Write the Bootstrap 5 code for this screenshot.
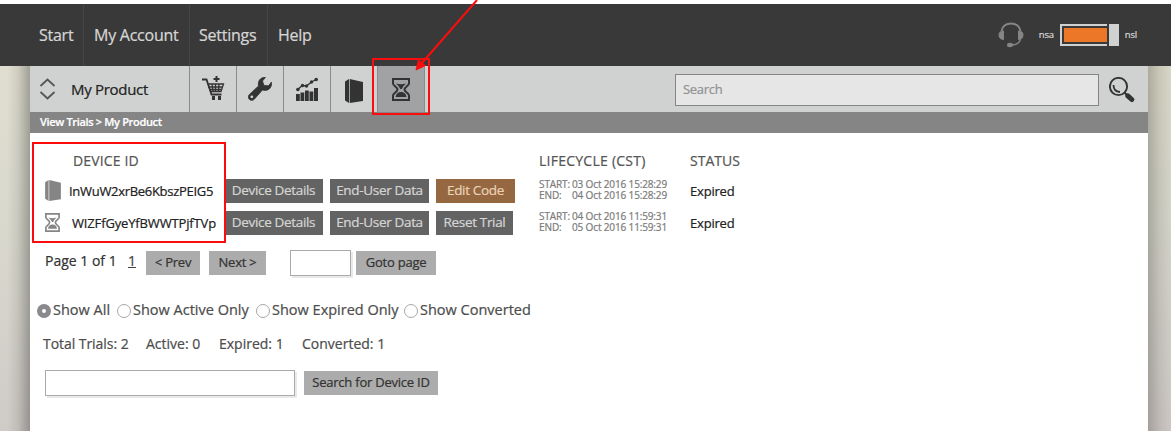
<!DOCTYPE html>
<html lang="en">
<head>
    <meta charset="UTF-8">
    <meta name="viewport" content="width=device-width, initial-scale=1.0">
    <title>View Trials</title>
    <link href="https://cdn.jsdelivr.net/npm/bootstrap@5.3.0/dist/css/bootstrap.min.css" rel="stylesheet">
    <style>
        body { font-family: "Open Sans", "Noto Sans", sans-serif; font-size: 14px; line-height: 20px; color: #4d4d4d; background: #fff; height: 431px; overflow: hidden; white-space: nowrap; -webkit-text-stroke: .22px; }
        .page { height: 431px; padding-top: 4px; }
        .topbar { height: 62px; background: #393939; padding-left: 30px; padding-right: 34px; color: #d6d6d6; }
        .topbar a { color: #d6d6d6; text-decoration: none; font-size: 16px; height: 62px; line-height: 62px; border-right: 1px solid #454545; letter-spacing: -.25px; }
        .topbar a:last-child { border: 0; }
        .m-start { width: 54px; padding-left: 9px; }
        .m-account { width: 106px; padding-left: 10px; }
        .m-settings { width: 78px; padding-left: 9px; }
        .m-help { width: 60px; padding-left: 10px; }
        .headset { margin-right: 15px; }
        .toggle-text { font-size: 9.5px; letter-spacing: -.2px; }
        .toggle-box { width: 47px; height: 22px; border: 2px solid #d0d2d1; border-right: 0; padding: 2px 0 2px 2px; margin-left: 6px; }
        .toggle-fill { height: 14px; background: #ec7728; }
        .toggle-knob { width: 10px; height: 22px; background: #d0d2d1; margin: 0 6px 0 2px; }
        .stage { height: 365px; }
        .edge { width: 30px; background: linear-gradient(90deg, rgba(0,0,0,0) 25%, rgba(0,0,0,.08) 60%, rgba(0,0,0,.28)), linear-gradient(#e0ded0, #d9d8cd 45%, #cfcbc7); }
        .edge-right { width: 23px; background: linear-gradient(270deg, rgba(0,0,0,0), rgba(0,0,0,.07) 50%, rgba(0,0,0,.2)), linear-gradient(#d8d7c6, #d3d2c7 45%, #ccc7c4); }
        .sheet { width: 1118px; background: #fff; }
        .toolbar { height: 46px; background: #d0d2d1; }
        .product { width: 159px; padding-left: 9px; font-size: 15px; color: #222; letter-spacing: -.3px; }
        .product svg { margin-right: 15px; }
        .tool { width: 47px; height: 46px; border-left: 1px solid #8b8b8b; }
        .tool.active { width: 48px; background: #a1a2a4; border-right: 1px solid #8b8b8b; }
        .find { width: 424px; height: 32px; border: 1px solid #858585; background: #e6e6e6; padding-left: 7px; line-height: 29px; font-size: 13px; letter-spacing: -.3px; color: #929292; margin: 2px 10px 0 0; }
        .find-icon { margin: 2px 13px 0 0; }
        .crumbs { height: 21px; line-height: 20px; background: #858585; color: #fff; font-size: 11px; font-weight: 600; padding-left: 10px; letter-spacing: -.33px; }
        .head-line { height: 20px; margin-top: 18px; font-size: 14px; color: #555; padding-left: 1px; }
        .h-id { width: 466px; letter-spacing: .15px; }
        .h-life { width: 151px; letter-spacing: .25px; }
        .dev-list { margin-top: 4px; }
        .dev-line { height: 32px; color: #222; }
        .dev-icon { width: 42px; padding-left: 15px; }
        .dev-icon svg { margin-top: -2px; }
        .dev-id { width: 152px; font-size: 13px; line-height: 18px; padding-bottom: 1px; }
        .id-a { margin-left: -3px; width: 155px; letter-spacing: -.3px; }
        .id-b { letter-spacing: -.15px; }
        .dev-acts { width: 315px; }
        .dev-life { width: 151px; font-size: 10px; line-height: 11px; color: #7b7b7b; letter-spacing: -.14px; padding-bottom: 2px; }
        .life-key { width: 33px; letter-spacing: -.1px; }
        .dev-state { font-size: 13px; letter-spacing: -.2px; }
        .flat { height: 24px; line-height: 23px; font-size: 13.5px; letter-spacing: -.33px; text-align: center; background: #636363; color: #d5d5d5; margin-right: 7px; }
        .w99 { width: 99px; }
        .w79 { width: 79px; }
        .w77 { width: 77px; }
        .brown { background: #956842; color: #ead2b5; }
        .grey { background: #acacac; color: #333; margin-right: 0; font-size: 13px; letter-spacing: -.22px; }
        .field { height: 26px; border: 1px solid #aaa; background: #fff; box-shadow: 2px 2px 0 #e9e9e9; }
        .pager { height: 26px; margin-top: 11px; padding-left: 15px; }
        .page-count { width: 83px; color: #333; margin-top: -5px; }
        .page-one { width: 18px; margin-top: -5px; color: #444; text-decoration: underline; }
        .prev { width: 54px; margin-right: 9px; }
        .next { width: 57px; margin-right: 24px; }
        .goto-field { width: 61px; margin-right: 5px; }
        .goto { width: 80px; }
        .filters { margin-top: 24px; padding-left: 7px; height: 20px; }
        .filters span { font-size: 14.5px; }
        .dot { width: 14px; height: 14px; border: 1px solid #a8a8a8; border-radius: 50%; background: #fff; margin: 2px 2px 0 0; }
        .dot.on { border: 5px solid #8a8a8e; }
        .f1 { width: 64px; }
        .f2 { width: 123px; }
        .f3 { width: 132px; }
        .totals { margin-top: 14px; padding-left: 13px; height: 20px; }
        .t1 { width: 103px; letter-spacing: -.05px; }
        .t2 { width: 73px; }
        .t3 { width: 83px; }
        .lookup { margin-top: 16px; padding-left: 15px; }
        .lookup-field { width: 250px; margin-right: 9px; }
        .lookup-go { width: 134px; }
        .note-box { position: absolute; border: 2px solid #fb0d0d; }
        .note-ids { left: 32px; top: 142px; width: 194px; height: 101px; }
        .note-tool { left: 372px; top: 58px; width: 58px; height: 57px; }
        .note-arrow { position: absolute; left: 410px; top: 0; }
    </style>
</head>
<body>
    <svg class="d-none">
        <symbol id="glass" viewBox="0 0 18 23">
            <path d="M1 1h16v4.500c0 2-4.500 3.500-4.500 6s4.500 4 4.500 6V22H1v-4.500c0-2 4.500-3.500 4.500-6S1 7.500 1 5.500z" fill="none" stroke="currentColor" stroke-width="2"/>
            <path d="M4 5.500q5 1.600 10 0-3.500 3-4.300 5.500H8.300Q7.500 8.500 4 5.500zM3.500 19q1-5 5.500-5t5.500 5z" fill="currentColor"/>
        </symbol>
        <symbol id="book" viewBox="0 0 18 24">
            <path d="M0 2.500 4 0v24l-4-2.500zM4.700 0 18 3v19L4.700 24z" fill="currentColor"/>
        </symbol>
    </svg>

    <div class="page">
        <div class="topbar d-flex align-items-center justify-content-between">
            <nav class="d-flex">
                <a href="#" class="m-start">Start</a>
                <a href="#" class="m-account">My Account</a>
                <a href="#" class="m-settings">Settings</a>
                <a href="#" class="m-help">Help</a>
            </nav>
            <div class="d-flex align-items-center">
                <svg class="headset" width="26" height="26" viewBox="0 0 26 26" fill="none" stroke="#858585">
                    <path d="M3.500 9C4 4.500 8 1.500 13 1.500S22 4.500 22.500 9" stroke-width="2"/>
                    <path d="M5.500 9v8.500Q1 17 1 13t4.500-4zM20.500 9v8.500Q25 17 25 13t-4.500-4z" fill="#858585" stroke-width="1"/>
                    <path d="M22.500 16c0 4-2 6.500-9 7" stroke-width="1.500"/>
                    <ellipse cx="12" cy="23" rx="3" ry="2.200" fill="#858585" stroke="none"/>
                </svg>
                <span class="toggle-text">nsa</span>
                <div class="toggle-box"><div class="toggle-fill"></div></div>
                <div class="toggle-knob"></div>
                <span class="toggle-text">nsl</span>
            </div>
        </div>

        <div class="stage d-flex">
            <div class="edge"></div>
            <div class="sheet">
                <div class="toolbar d-flex align-items-center">
                    <div class="product d-flex align-items-center">
                        <svg width="17" height="22" viewBox="0 0 17 22" fill="none" stroke="#555" stroke-width="1.800"><path d="M1.500 8 8.500 1.500l7 6.500M1.500 14l7 6.500 7-6.500"/></svg>
                        <span>My Product</span>
                    </div>
                    <div class="tool d-flex align-items-center justify-content-center">
                        <svg width="24" height="26" viewBox="0 0 24 26" fill="none" stroke="#333">
                            <path d="M1 3.500h4.500l5 15h10" stroke-width="1.800"/>
                            <path d="M6.500 8h16L20 15.500H9M7 11h14.500M8 13.500h13M11 8l1 7.500M14.500 8v7.500M18 8l-.5 7.500" stroke-width="1.300"/>
                            <path d="M15.500 0v6M12.500 3h6" stroke-width="2"/>
                            <path d="M11 20h3v4h-3zM17 20h3v4h-3z" fill="#333" stroke="none"/>
                        </svg>
                    </div>
                    <div class="tool d-flex align-items-center justify-content-center">
                        <svg width="24" height="24" viewBox="0 0 24 24">
                            <path d="M17.500.3 14.500 4l1.500 4.500 4.500.3 3-3.800c.6 4.500-1.700 7.800-5.500 8.300-1.500.2-2.600 0-3.500-.4L6.500 22c-2 2.300-5 1.400-5.900-.8-.5-1.500-.2-2.900.8-3.700L10.500 9C9.500 4 12.500 0 17.500.3z" fill="#333" stroke="#333" stroke-width=".8"/>
                            <circle cx="3.800" cy="19.800" r="1.400" fill="#d0d2d1"/>
                        </svg>
                    </div>
                    <div class="tool d-flex align-items-center justify-content-center">
                        <svg width="22" height="24" viewBox="0 0 22 24" fill="#333">
                            <path d="M0 17h3.800v7H0zM4.500 15.500h3.800V24H4.500zM9 13.500h3.800V24H9zM13.500 14.500h3.800V24h-3.800zM18 11h4v13h-4z"/>
                            <path d="m1.500 12.500 5-4 4 .5 5-4 4.800-2.500" fill="none" stroke="#333" stroke-width="1.400"/>
                            <circle cx="1.900" cy="12.500" r="1.800"/><circle cx="6.500" cy="8.500" r="1.700"/><circle cx="10.500" cy="9" r="1.700"/><circle cx="15.500" cy="5" r="1.700"/><circle cx="20.200" cy="2.500" r="1.800"/>
                        </svg>
                    </div>
                    <div class="tool d-flex align-items-center justify-content-center"><svg class="mt-1" width="18" height="24" color="#333"><use href="#book"/></svg></div>
                    <div class="tool active d-flex align-items-center justify-content-center"><svg width="18" height="23" color="#333"><use href="#glass"/></svg></div>
                    <div class="find ms-auto">Search</div>
                    <svg class="find-icon" width="26" height="26" viewBox="0 0 26 26" fill="none" stroke="#333">
                        <circle cx="9.500" cy="9.500" r="8.600" stroke-width="1.900"/>
                        <path d="M4.500 8q0 6.500 6.500 7" stroke-width="1.800"/>
                        <path d="m15.500 15.500 3 3" stroke-width="2"/>
                        <path d="m18.800 18.800 4 3.700" stroke-width="5" stroke-linecap="round"/>
                    </svg>
                </div>
                <div class="crumbs">View Trials &gt; My Product</div>

                <div class="head-line d-flex">
                    <div class="dev-icon"></div>
                    <div class="h-id">DEVICE ID</div>
                    <div class="h-life">LIFECYCLE (CST)</div>
                    <div class="h-status">STATUS</div>
                </div>
                <div class="dev-list">
                    <div class="dev-line d-flex align-items-center">
                        <div class="dev-icon d-flex"><svg width="16" height="21" color="#858585"><use href="#book"/></svg></div>
                        <div class="dev-id id-a">InWuW2xrBe6KbszPEIG5</div>
                        <div class="dev-acts d-flex"><div class="flat w99">Device Details</div><div class="flat w99">End-User Data</div><div class="flat brown w79">Edit Code</div></div>
                        <div class="dev-life">
                            <div class="d-flex"><div class="life-key">START:</div><div>03 Oct 2016 15:28:29</div></div>
                            <div class="d-flex"><div class="life-key">END:</div><div>04 Oct 2016 15:28:29</div></div>
                        </div>
                        <div class="dev-state">Expired</div>
                    </div>
                    <div class="dev-line d-flex align-items-center">
                        <div class="dev-icon d-flex"><svg width="15" height="19" color="#858585"><use href="#glass"/></svg></div>
                        <div class="dev-id id-b">WIZFfGyeYfBWWTPjfTVp</div>
                        <div class="dev-acts d-flex"><div class="flat w99">Device Details</div><div class="flat w99">End-User Data</div><div class="flat w77">Reset Trial</div></div>
                        <div class="dev-life">
                            <div class="d-flex"><div class="life-key">START:</div><div>04 Oct 2016 11:59:31</div></div>
                            <div class="d-flex"><div class="life-key">END:</div><div>05 Oct 2016 11:59:31</div></div>
                        </div>
                        <div class="dev-state">Expired</div>
                    </div>
                </div>

                <div class="pager d-flex align-items-center">
                    <div class="page-count">Page 1 of 1</div>
                    <div class="page-one">1</div>
                    <div class="flat grey prev">&lt; Prev</div>
                    <div class="flat grey next">Next &gt;</div>
                    <div class="field goto-field"></div>
                    <div class="flat grey goto">Goto page</div>
                </div>

                <div class="filters d-flex align-items-center">
                    <div class="dot on"></div><span class="f1">Show All</span>
                    <div class="dot"></div><span class="f2">Show Active Only</span>
                    <div class="dot"></div><span class="f3">Show Expired Only</span>
                    <div class="dot"></div><span>Show Converted</span>
                </div>
                <div class="totals d-flex">
                    <div class="t1">Total Trials: 2</div>
                    <div class="t2">Active: 0</div>
                    <div class="t3">Expired: 1</div>
                    <div>Converted: 1</div>
                </div>
                <div class="lookup d-flex align-items-center">
                    <div class="field lookup-field"></div>
                    <div class="flat grey lookup-go">Search for Device ID</div>
                </div>
            </div>
            <div class="edge-right"></div>
        </div>
    </div>

    <!-- callouts -->
    <div class="note-box note-ids"></div>
    <div class="note-box note-tool"></div>
    <svg class="note-arrow" width="70" height="75" viewBox="0 0 70 75">
        <path d="M67 0 11 64" stroke="#fb0d0d" stroke-width="2"/>
        <path d="m6 70 2.500-10 7 5.500z" fill="#fb0d0d" stroke="#fb0d0d"/>
    </svg>
    <script src="https://cdn.jsdelivr.net/npm/bootstrap@5.3.0/dist/js/bootstrap.bundle.min.js"></script>
</body>
</html>
